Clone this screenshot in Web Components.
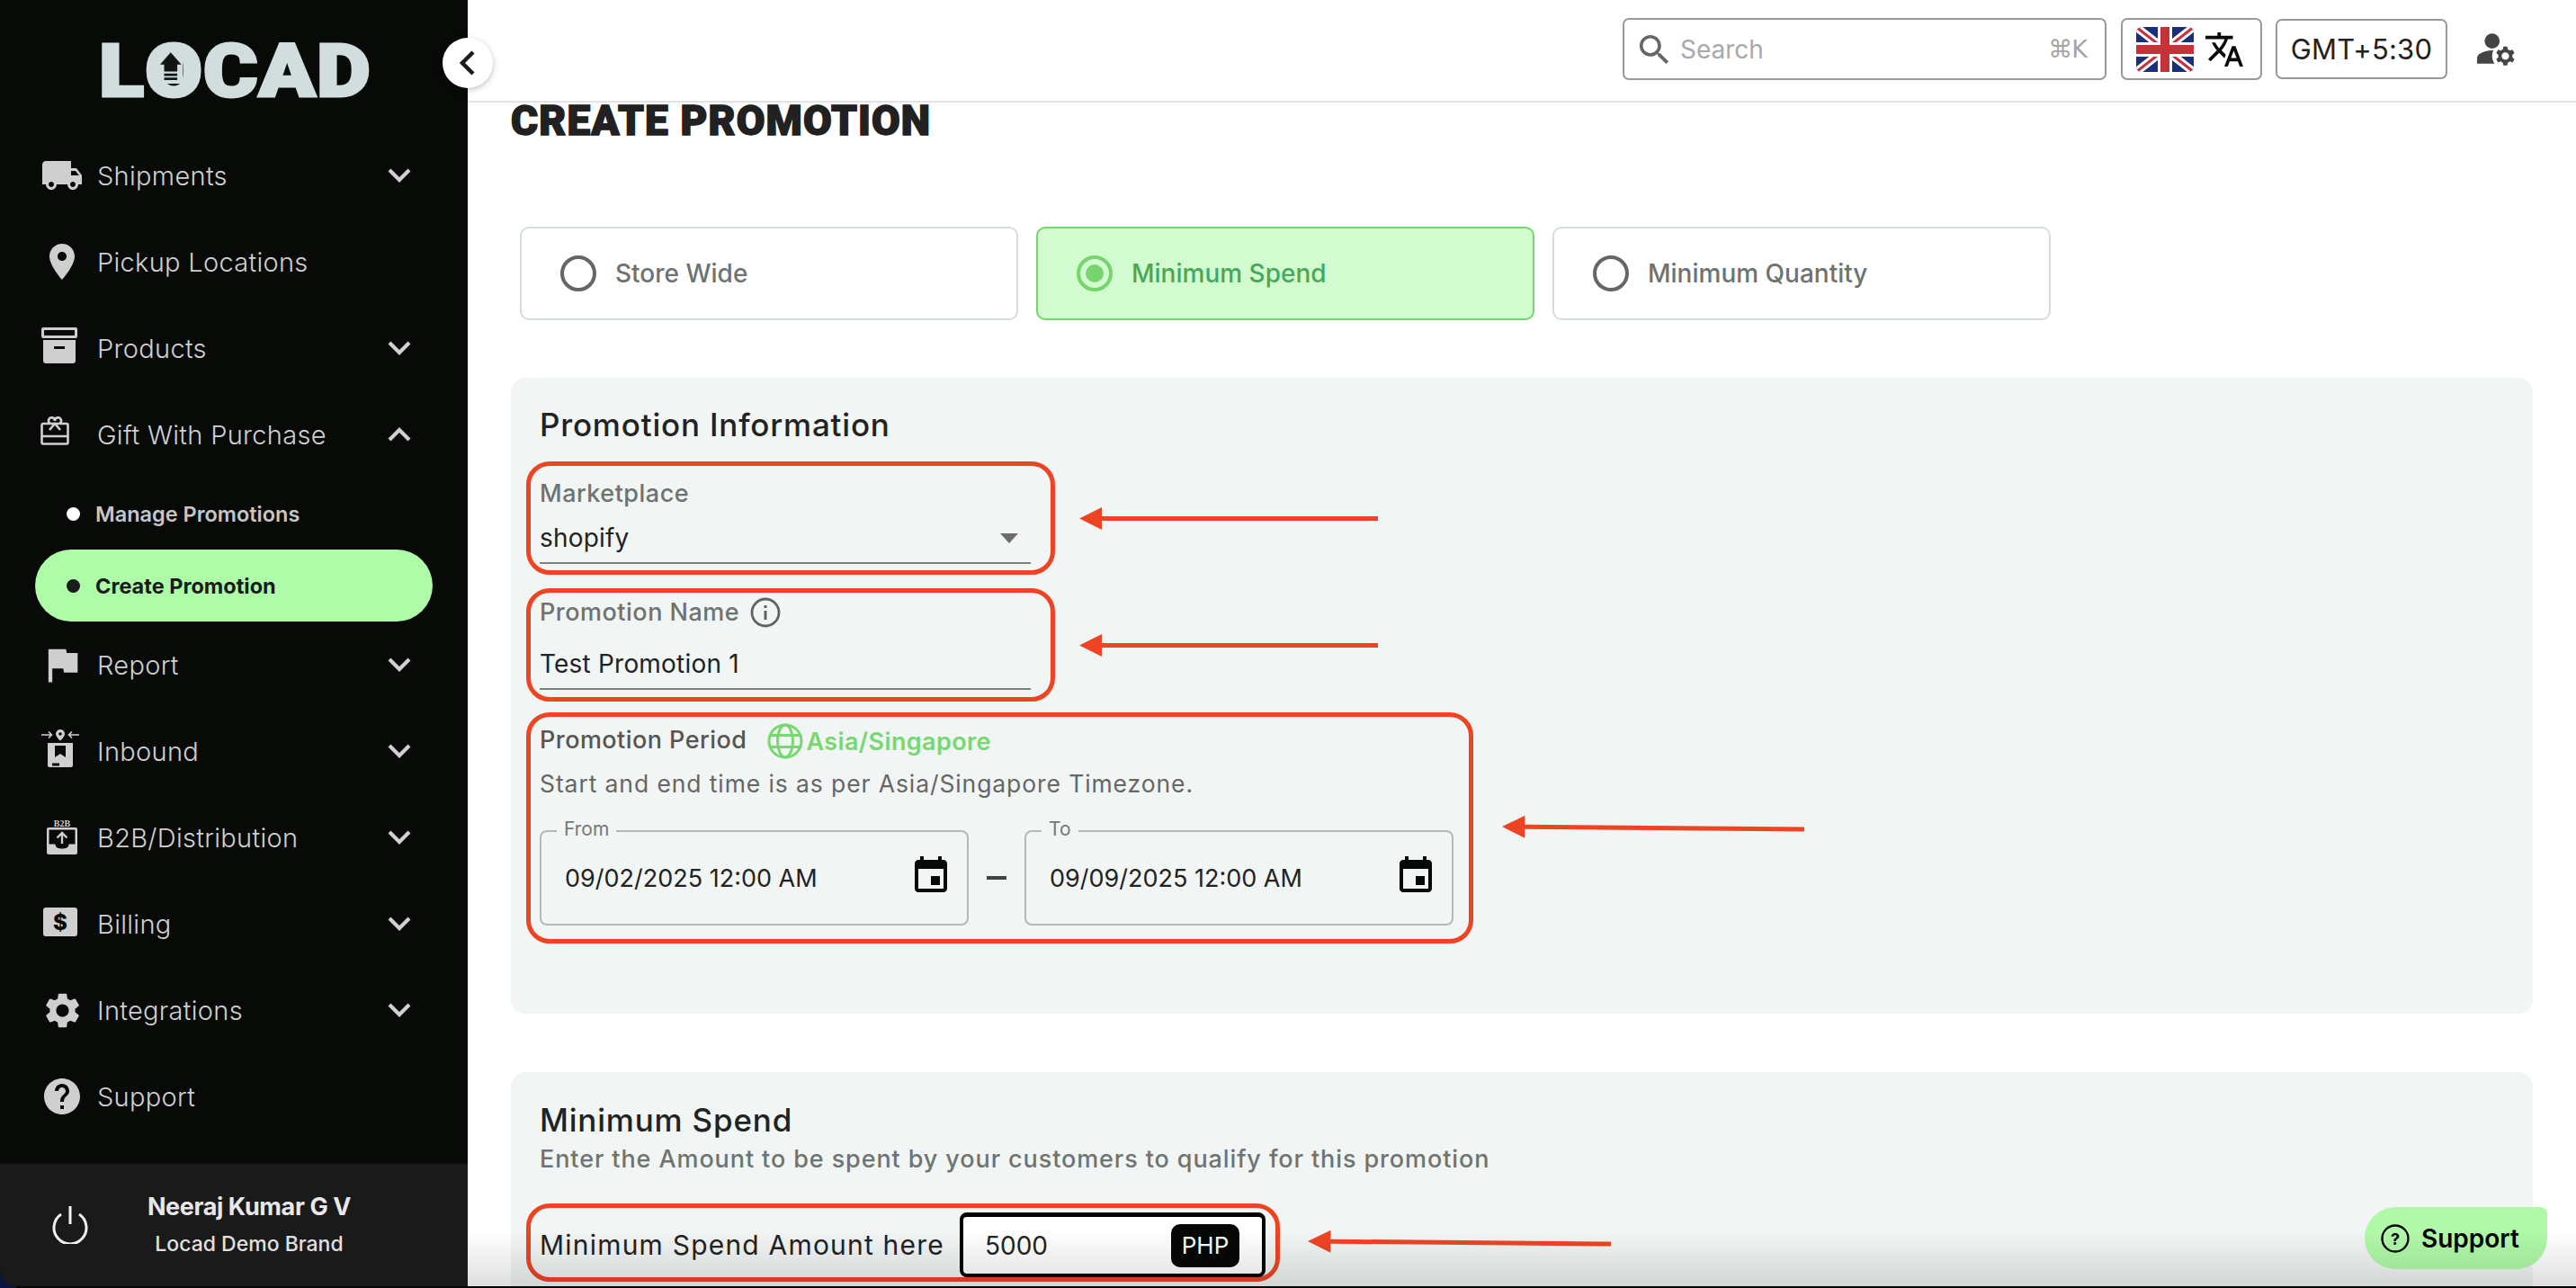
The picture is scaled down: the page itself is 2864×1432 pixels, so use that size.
<!DOCTYPE html>
<html>
<head>
<meta charset="utf-8">
<title>Create Promotion</title>
<style>
  html, body { margin: 0; padding: 0; background: linear-gradient(90deg, #07153f 0, #07153f 18px, #050505 18px); }
  body { width: 2864px; height: 1432px; overflow: hidden; font-family: Inter, "Liberation Sans", sans-serif; }
</style>
</head>
<body>
<app-shell>
  <side-nav slot="nav">
    <nav-item label="Shipments" chevron="down">
      <svg slot="icon" width="48" height="48" viewBox="0 0 24 24"><path d="M20 8h-3V4H3c-1.1 0-2 .9-2 2v11h2c0 1.66 1.34 3 3 3s3-1.34 3-3h6c0 1.66 1.34 3 3 3s3-1.34 3-3h2v-5l-3-4zM6 18.5c-.83 0-1.5-.67-1.5-1.5s.67-1.5 1.5-1.5 1.5.67 1.5 1.5-.67 1.5-1.5 1.5zm13.5-9l1.96 2.5H17V9.5h2.5zm-1.5 9c-.83 0-1.5-.67-1.5-1.5s.67-1.5 1.5-1.5 1.5.67 1.5 1.5-.67 1.5-1.5 1.5z"/></svg>
    </nav-item>
    <nav-item label="Pickup Locations">
      <svg slot="icon" width="48" height="48" viewBox="0 0 24 24"><path d="M12 2C8.13 2 5 5.13 5 9c0 5.25 7 13 7 13s7-7.75 7-13c0-3.87-3.13-7-7-7zm0 9.5c-1.38 0-2.5-1.12-2.5-2.5s1.12-2.5 2.5-2.5 2.5 1.12 2.5 2.5-1.12 2.5-2.5 2.5z"/></svg>
    </nav-item>
    <nav-item label="Products" chevron="down">
      <svg slot="icon" width="40" height="40" viewBox="0 0 40 40" style="margin:-6px 6px 0 0"><path fill-rule="evenodd" d="M2 0h36a2 2 0 0 1 2 2v8a2 2 0 0 1-2 2H2a2 2 0 0 1-2-2V2a2 2 0 0 1 2-2zm1 3v6h34V3zM2 14h36v23a3 3 0 0 1-3 3H5a3 3 0 0 1-3-3zm12 7v3h12v-3z"/></svg>
    </nav-item>
    <nav-item label="Gift With Purchase" chevron="up">
      <svg slot="icon" width="32" height="32" viewBox="0 0 32 32" style="margin:-8px 16px 0 0"><path fill="none" stroke="#cfcfcf" stroke-width="2.6" d="M3 8h26a1.5 1.5 0 0 1 1.5 1.5v19.500a1.500 1.500 0 0 1-1.500 1.500H3a1.500 1.500 0 0 1-1.500-1.500V9.500A1.500 1.500 0 0 1 3 8zM1.500 22h29M11 8a3.500 3.500 0 1 1 5-3 3.500 3.500 0 1 1 5 3M10 15l6-7 6 7"/></svg>
    </nav-item>
    <sub-item>Manage Promotions</sub-item>
    <sub-item active>Create Promotion</sub-item>
    <nav-item label="Report" chevron="down">
      <svg slot="icon" width="52" height="52" viewBox="0 0 24 24"><path d="M14.400 6L14 4H5v17h2v-7h5.600l.4 2h7V6z"/></svg>
    </nav-item>
    <nav-item label="Inbound" chevron="down">
      <svg slot="icon" width="42" height="42" viewBox="0 0 42 42" style="margin:-6px 4px 0 0"><path fill="none" stroke="#cfcfcf" stroke-width="1.600" d="M0 6h11M8 2.500 11.500 6 8 9.500M42 6H31M34 2.500 30.500 6 34 9.500"/><path fill-rule="evenodd" d="M21 0a5 5 0 0 1 5 5c0 3-5 7.500-5 7.500S16 8 16 5a5 5 0 0 1 5-5zm0 3.200a1.800 1.800 0 1 0 0 3.600 1.800 1.800 0 0 0 0-3.600z"/><path fill-rule="evenodd" d="M7 15h28v25a2 2 0 0 1-2 2H9a2 2 0 0 1-2-2zm8 3v13l6-4 6 4V18zm-3 19.500v3h8v-3z"/></svg>
    </nav-item>
    <nav-item label="B2B/Distribution" chevron="down">
      <svg slot="icon" width="34" height="40" viewBox="0 0 34 40" style="margin-top:-2px"><text x="17" y="8.500" text-anchor="middle" font-family="Liberation Serif, serif" font-size="10" font-weight="700" fill="#cfcfcf">B2B</text><path fill-rule="evenodd" d="M2 10h30a2 2 0 0 1 2 2v26a2 2 0 0 1-2 2H2a2 2 0 0 1-2-2V12a2 2 0 0 1 2-2zm.5 2.500v16h7c0 4 3.400 5 7.500 5s7.500-1 7.500-5h7v-16z"/><path fill="none" stroke="#cfcfcf" stroke-width="2.400" d="M17 28V16M11.500 21.500 17 16l5.500 5.500"/></svg>
    </nav-item>
    <nav-item label="Billing" chevron="down">
      <svg slot="icon" width="38" height="32" viewBox="0 0 38 32" style="margin:-4px 4px 0 0"><rect width="38" height="32" rx="3" fill="#cfcfcf"/><text x="19" y="25" text-anchor="middle" font-family="Inter, sans-serif" font-size="24" font-weight="800" fill="#070a07">$</text></svg>
    </nav-item>
    <nav-item label="Integrations" chevron="down">
      <svg slot="icon" width="47" height="47" viewBox="0 0 24 24"><path d="M19.140 12.940c.04-.3.06-.61.06-.94 0-.32-.02-.64-.07-.94l2.030-1.580c.18-.14.23-.41.12-.61l-1.920-3.320c-.12-.22-.37-.29-.59-.22l-2.390.96c-.5-.38-1.030-.7-1.620-.94l-.36-2.540c-.04-.24-.24-.41-.48-.41h-3.840c-.24 0-.43.17-.47.41l-.36 2.540c-.59.24-1.130.57-1.620.94l-2.390-.96c-.22-.08-.47 0-.59.22L2.740 8.870c-.12.21-.08.47.12.61l2.030 1.580c-.05.3-.09.63-.09.94s.02.64.07.94l-2.030 1.580c-.18.14-.23.41-.12.61l1.920 3.320c.12.22.37.29.59.22l2.390-.96c.5.38 1.030.7 1.620.94l.36 2.540c.05.24.24.41.48.41h3.840c.24 0 .44-.17.47-.41l.36-2.540c.59-.24 1.130-.56 1.620-.94l2.390.96c.22.08.47 0 .59-.22l1.920-3.320c.12-.22.07-.47-.12-.61l-2.010-1.580zM12 15.600c-1.980 0-3.600-1.620-3.600-3.600s1.620-3.600 3.600-3.600 3.600 1.620 3.600 3.600-1.620 3.600-3.600 3.600z"/></svg>
    </nav-item>
    <nav-item label="Support">
      <svg slot="icon" width="48" height="48" viewBox="0 0 24 24"><path d="M12 2C6.480 2 2 6.480 2 12s4.480 10 10 10 10-4.480 10-10S17.520 2 12 2zm1 17h-2v-2h2v2zm2.070-7.750l-.9.920C13.450 12.900 13 13.500 13 15h-2v-.5c0-1.100.45-2.100 1.170-2.830l1.240-1.260c.37-.36.59-.86.59-1.410 0-1.100-.9-2-2-2s-2 .9-2 2H8c0-2.210 1.790-4 4-4s4 1.790 4 4c0 .88-.36 1.680-.93 2.250z"/></svg>
    </nav-item>
  </side-nav>

  <top-bar slot="top"></top-bar>

  <h-title slot="main">CREATE PROMOTION</h-title>

  <radio-row slot="main">
    <radio-card>Store Wide</radio-card>
    <radio-card checked>Minimum Spend</radio-card>
    <radio-card>Minimum Quantity</radio-card>
  </radio-row>

  <form-card slot="main" style="height:707px;margin-top:64px;padding-top:30px">
    <card-heading>Promotion Information</card-heading>
    <mark-box style="width:588px;height:126px;margin-top:19px;padding:13px 0 0 10px">
      <text-field label="Marketplace" value="shopify" gap="11" select></text-field>
    </mark-box>
    <mark-box style="width:588px;height:126px;margin-top:15px;padding:4px 0 0 10px">
      <text-field label="Promotion Name" value="Test Promotion 1" gap="19" info></text-field>
    </mark-box>
    <mark-box style="width:1053px;height:257px;margin-top:12px;padding:7px 0 0 10px">
      <period-head></period-head>
      <date-range></date-range>
    </mark-box>
  </form-card>

  <form-card slot="main" style="height:300px;margin-top:65px;padding-top:31px">
    <card-heading>Minimum Spend</card-heading>
    <card-note>Enter the Amount to be spent by your customers to qualify for this promotion</card-note>
    <mark-box style="width:838px;height:87px;margin-top:31px;padding:5px 11px 0 10px">
      <spend-row></spend-row>
    </mark-box>
  </form-card>

  <note-arrow slot="over" style="left:680px;top:564px;width:332px"></note-arrow>
  <note-arrow slot="over" style="left:680px;top:705px;width:332px"></note-arrow>
  <note-arrow slot="over" style="left:1150px;top:908px;width:336px" tilt="3"></note-arrow>
  <note-arrow slot="over" style="left:934px;top:1369px;width:337px" tilt="3"></note-arrow>
  <support-fab slot="over"></support-fab>
</app-shell>

<script>
const FONT = 'Inter, "Liberation Sans", sans-serif';

function tpl(html) {
  const t = document.createElement('template');
  t.innerHTML = html;
  return t;
}

class Base extends HTMLElement {
  constructor() {
    super();
    this.attachShadow({ mode: 'open' });
    this.shadowRoot.appendChild(this.constructor.template.content.cloneNode(true));
  }
}

class AppShell extends Base {
  static template = tpl(`
    <style>
      :host { display: grid; grid-template-columns: 520px 1fr; width: 2864px; height: 1430px; position: relative; }
      .right { background: #fff; display: flex; flex-direction: column; height: 1430px; overflow: hidden; position: relative; }
      .scroll { flex: 1; overflow: hidden; padding: 0 48px; }
      .shade { position: absolute; left: 0; right: 0; bottom: 0; height: 62px; z-index: 5; pointer-events: none;
        background: linear-gradient(rgba(0,0,0,0), rgba(0,0,0,.125)); }
      .collapse { position: absolute; left: 492px; top: 42px; width: 56px; height: 56px; border-radius: 50%; background: #fff;
        box-shadow: 0 2px 6px rgba(0,0,0,.25); display: flex; align-items: center; justify-content: center; z-index: 6; }
    </style>
    <slot name="nav"></slot>
    <div class="right">
      <slot name="top"></slot>
      <div class="scroll"><slot name="main"></slot></div>
      <slot name="over"></slot>
      <div class="shade"></div>
    </div>
    <div class="collapse">
      <svg width="20" height="30" viewBox="0 0 20 30"><path d="M16 3 4 15l12 12" fill="none" stroke="#1c1c1c" stroke-width="4.500"/></svg>
    </div>`);
}

class SideNav extends Base {
  static template = tpl(`
    <style>
      :host { display: flex; flex-direction: column; width: 520px; height: 1430px; background: #070a07; color: #cfcfcf;
        border-bottom-left-radius: 18px; overflow: hidden; font-family: ${FONT}; }
      .logo { height: 147px; box-sizing: border-box; padding: 40px 0 0 110px; flex: none; }
      .mark { display: inline-block; font: 900 81px/80px Roboto, sans-serif; color: #d1dedd; -webkit-text-stroke: 3px #d1dedd; letter-spacing: 1px; white-space: nowrap;
        transform: scaleX(1.14); transform-origin: left center; }
      .o { position: relative; display: inline-block; }
      .o svg { position: absolute; left: 13px; top: 17px; width: 24px; height: 36px; }
      .list { flex: 1; }
      .foot { height: 136px; flex: none; background: #1a1a1a; display: flex; align-items: center; box-sizing: border-box; padding-left: 58px; }
      .who { width: 300px; margin-left: 29px; text-align: center; }
      .name { font-size: 27px; line-height: 38px; font-weight: 700; color: #e8e8e8; letter-spacing: -.4px; }
      .brand { font-size: 23px; line-height: 36px; font-weight: 500; color: #e0e0e0; margin-top: 4px; }
    </style>
    <div class="logo"><span class="mark">L<span class="o">O<svg viewBox="0 0 30 32" preserveAspectRatio="none"><rect x="-6" y="-2" width="42" height="36" fill="#d1dedd"/><path d="M15 1 28 13h-5v7H7v-7H2z" fill="#101412"/><path d="M7 22h16v2.500H7zM7 26h16v2.500H7z" fill="#101412"/></svg></span>CAD</span></div>
    <div class="list"><slot></slot></div>
    <div class="foot">
      <svg width="40" height="42" viewBox="0 0 40 42"><path d="M10 9a18 18 0 1 0 20 0M20 0v20" fill="none" stroke="#f2f2f2" stroke-width="3"/></svg>
      <div class="who"><div class="name">Neeraj Kumar G V</div><div class="brand">Locad Demo Brand</div></div>
    </div>`);
}

class NavItem extends Base {
  static template = tpl(`
    <style>
      :host { display: flex; align-items: center; height: 96px; color: #d0d0d0; }
      .ico { width: 60px; margin-left: 39px; display: flex; justify-content: center; align-items: center; fill: #cfcfcf; }
      ::slotted(svg) { fill: #cfcfcf; display: block; }
      .txt { margin-left: 9px; flex: 1; font-size: 29px; font-weight: 300; letter-spacing: .3px; white-space: nowrap; }
      svg.chev { margin-right: 63px; }
    </style>
    <div class="ico"><slot name="icon"></slot></div>
    <div class="txt"></div>
    <svg class="chev" width="26" height="18" viewBox="0 0 26 18"><path fill="none" stroke="#d0d0d0" stroke-width="4.200"/></svg>`);
  connectedCallback() {
    this.shadowRoot.querySelector('.txt').textContent = this.getAttribute('label');
    const chev = this.shadowRoot.querySelector('.chev');
    const dir = this.getAttribute('chevron');
    if (!dir) chev.style.visibility = 'hidden';
    chev.querySelector('path').setAttribute('d', dir === 'up' ? 'M2 15 13 4l11 11' : 'M2 3l11 11L24 3');
  }
}

class SubItem extends Base {
  static template = tpl(`
    <style>
      :host { display: flex; align-items: center; height: 80px; margin: 0 39px; padding-left: 35px; box-sizing: border-box; width: 442px;
        border-radius: 40px; font-size: 23.500px; font-weight: 600; color: #c6c6c6; }
      :host([active]) { background: #aefba8; color: #1a1c1a; font-weight: 700; }
      .dot { width: 15px; height: 15px; border-radius: 50%; background: #fff; margin-right: 17px; }
      :host([active]) .dot { background: #1a1c1a; }
    </style>
    <span class="dot"></span><slot></slot>`);
}

class TopBar extends Base {
  static template = tpl(`
    <style>
      :host { display: flex; align-items: center; height: 114px; flex: none; box-sizing: border-box; padding: 0 66px 3px 0; justify-content: flex-end;
        background: #fff; border-bottom: 2px solid #e3e3e3; box-shadow: 0 2px 6px rgba(0,0,0,.04); font-family: ${FONT}; position: relative; z-index: 2; }
      .box { height: 69px; box-sizing: border-box; border: 2px solid #999; border-radius: 7px; display: flex; align-items: center; }
      .search { width: 538px; padding: 0 20px 0 16px; color: #a9a9a9; font-size: 28px; }
      .search span { flex: 1; margin-left: 12px; }
      .search b { font: 400 27px "DejaVu Sans", sans-serif; color: #a5a5a5; letter-spacing: -1px; }
      .lang { width: 157px; margin-left: 16px; padding-left: 15px; }
      .lang .tr { margin-left: 13px; }
      .gmt { width: 191px; margin-left: 15px; justify-content: center; font-size: 31px; color: #222; letter-spacing: .2px; height: 67px; }
      .user { margin-left: 33px; }
    </style>
    <div class="box search">
      <svg width="34" height="34" viewBox="2.500 2.500 18.500 18.500"><path fill="#666" d="M15.500 14h-.79l-.28-.27C15.410 12.590 16 11.110 16 9.500 16 5.910 13.090 3 9.500 3S3 5.910 3 9.500 5.910 16 9.500 16c1.610 0 3.090-.59 4.230-1.570l.27.28v.79l5 4.990L20.490 19l-4.990-5zm-6 0C7.010 14 5 11.990 5 9.500S7.010 5 9.500 5 14 7.010 14 9.500 11.990 14 9.500 14z"/></svg>
      <span>Search</span><b>⌘K</b>
    </div>
    <div class="box lang">
      <svg width="64" height="50" viewBox="0 0 64 50"><defs><clipPath id="fl"><rect width="64" height="50" rx="6"/></clipPath></defs><g clip-path="url(#fl)"><rect width="64" height="50" fill="#1a2f7a"/><path d="M0 0l64 50M64 0 0 50" stroke="#fff" stroke-width="9"/><path d="M0 0l64 50M64 0 0 50" stroke="#c8303a" stroke-width="3"/><path d="M32 0v50M0 25h64" stroke="#fff" stroke-width="16"/><path d="M32 0v50M0 25h64" stroke="#c8303a" stroke-width="10"/></g></svg>
      <svg class="tr" width="42" height="42" viewBox="1 2 22 20"><path fill="#0a0a0a" d="M12.870 15.070l-2.540-2.510.03-.03c1.740-1.940 2.980-4.170 3.710-6.530H17V4h-7V2H8v2H1v1.990h11.170C11.500 7.920 10.440 9.750 9 11.350 8.070 10.320 7.300 9.190 6.690 8h-2c.73 1.630 1.730 3.170 2.980 4.560l-5.090 5.020L4 19l5-5 3.110 3.110.76-2.040zM18.500 10h-2L12 22h2l1.120-3h4.750L21 22h2l-4.500-12zm-2.620 7l1.620-4.330L19.120 17h-3.240z"/></svg>
    </div>
    <div class="box gmt">GMT+5:30</div>
    <svg class="user" width="44" height="40" viewBox="2 3.500 21 18"><circle cx="10" cy="8" r="4" fill="#444"/><path fill="#444" d="M10.670 13.020C10.450 13.010 10.230 13 10 13c-2.420 0-4.680.67-6.610 1.820-.88.52-1.390 1.500-1.390 2.530V20h9.260c-.79-1.130-1.260-2.510-1.260-4 0-1.070.25-2.070.67-2.980z"/><path fill="#444" d="M20.750 16c0-.22-.03-.42-.06-.63l1.140-1.010-1-1.730-1.450.49c-.32-.27-.68-.48-1.080-.63L18 11h-2l-.3 1.490c-.4.15-.76.36-1.080.63l-1.450-.49-1 1.730 1.140 1.010c-.03.21-.06.41-.06.63s.03.42.06.63l-1.140 1.010 1 1.730 1.450-.49c.32.27.68.48 1.080.63L16 21h2l.3-1.490c.4-.15.76-.36 1.080-.63l1.450.49 1-1.730-1.140-1.010c.03-.21.06-.41.06-.63zM17 18c-1.100 0-2-.9-2-2s.9-2 2-2 2 .9 2 2-.9 2-2 2z"/></svg>`);
}

class HTitle extends Base {
  static template = tpl(`
    <style>
      :host { display: block; height: 44px; margin-top: -2px; font: 900 46px/44px Roboto, sans-serif; color: #212121; -webkit-text-stroke: 1.500px #212121; letter-spacing: 1.100px; white-space: nowrap; }
    </style>
    <slot></slot>`);
}

class RadioRow extends Base {
  static template = tpl(`
    <style>:host { display: flex; gap: 20px; margin: 96px 0 0 10px; }</style>
    <slot></slot>`);
}

class RadioCard extends Base {
  static template = tpl(`
    <style>
      :host { display: flex; align-items: center; width: 554px; height: 104px; box-sizing: border-box; padding-left: 43px;
        background: #fff; border: 2px solid #d1dedd; border-radius: 10px; font-size: 28px; font-weight: 500; color: #6c7371; font-family: ${FONT}; }
      :host([checked]) { background: #d2fbcf; border-color: #72d66d; color: #46a85a; }
      .r { width: 40px; height: 40px; border-radius: 50%; box-sizing: border-box; border: 4px solid #666; margin-right: 21px; display: flex; align-items: center; justify-content: center; }
      :host([checked]) .r { border-color: #77d570; }
      .r i { display: none; width: 20px; height: 20px; border-radius: 50%; background: #77d570; }
      :host([checked]) .r i { display: block; }
    </style>
    <span class="r"><i></i></span><slot></slot>`);
}

class FormCard extends Base {
  static template = tpl(`
    <style>
      :host { display: block; box-sizing: border-box; width: 2248px; background: #f1f5f4; border-radius: 16px; padding-left: 32px; font-family: ${FONT}; }
      ::slotted(mark-box) { margin-left: -15px; }
    </style>
    <slot></slot>`);
}

class CardHeading extends Base {
  static template = tpl(`
    <style>:host { display: block; font-size: 35px; line-height: 44px; font-weight: 500; letter-spacing: .8px; color: #212322; }</style>
    <slot></slot>`);
}

class CardNote extends Base {
  static template = tpl(`
    <style>:host { display: block; font-size: 27px; line-height: 36px; margin-top: 4px; font-weight: 500; letter-spacing: .9px; color: #6e7472; white-space: nowrap; }</style>
    <slot></slot>`);
}

class MarkBox extends Base {
  static template = tpl(`
    <style>
      :host { display: block; box-sizing: border-box; border: 5px solid #ee4423; border-radius: 26px; }
    </style>
    <slot></slot>`);
}

class TextField extends Base {
  static template = tpl(`
    <style>
      :host { display: block; width: 546px; }
      .lab { display: flex; align-items: center; gap: 12px; font-size: 27px; line-height: 36px; font-weight: 500; letter-spacing: .5px; color: #6c7371; }
      .val { display: flex; align-items: center; justify-content: space-between; font-size: 28px; line-height: 40px; letter-spacing: .2px; color: #222; padding-bottom: 7px; border-bottom: 2px solid #808080; padding-right: 14px; }
      svg { display: none; }
      :host([select]) .tri, :host([info]) .inf { display: block; }
    </style>
    <div class="lab"><span class="l"></span>
      <svg class="inf" width="34" height="34" viewBox="0 0 34 34"><circle cx="17" cy="17" r="15" fill="none" stroke="#5e6462" stroke-width="2.800"/><path d="M15.500 15h3v10h-3zM15.500 9h3v3h-3z" fill="#5e6462"/></svg>
    </div>
    <div class="val"><span class="v"></span>
      <svg class="tri" width="20" height="11" viewBox="0 0 20 11"><path d="M0 0h20L10 11z" fill="#6d6d6d"/></svg>
    </div>`);
  connectedCallback() {
    const s = this.shadowRoot;
    s.querySelector('.l').textContent = this.getAttribute('label');
    s.querySelector('.v').textContent = this.getAttribute('value');
    s.querySelector('.val').style.marginTop = this.getAttribute('gap') + 'px';
  }
}

class PeriodHead extends Base {
  static template = tpl(`
    <style>
      :host { display: block; }
      .row { display: flex; align-items: center; height: 36px; font-size: 27px; font-weight: 500; letter-spacing: .45px; color: #555; }
      .globe { margin-left: 23px; margin-right: 3px; }
      .tz { color: #77d86f; font-weight: 600; margin-top: 4px; letter-spacing: .4px; }
      .note { font-size: 26.500px; line-height: 36px; margin-top: 13px; letter-spacing: .9px; color: #666; white-space: nowrap; }
    </style>
    <div class="row"><span>Promotion Period</span>
      <svg class="globe" width="40" height="40" viewBox="0 0 40 40" style="margin-top:4px"><g fill="none" stroke="#77d86f" stroke-width="3"><circle cx="20" cy="20" r="18"/><ellipse cx="20" cy="20" rx="8.500" ry="18"/><path d="M3 13.500h34M3 26.500h34"/></g></svg>
      <span class="tz">Asia/Singapore</span></div>
    <div class="note">Start and end time is as per Asia/Singapore Timezone.</div>`);
}

class DateRange extends Base {
  static template = tpl(`
    <style>
      :host { display: flex; align-items: center; margin-top: 34px; width: 1016px; }
      i { width: 22px; height: 4px; background: #444; margin: 0 20px; flex: none; }
    </style>
    <date-field label="From" value="09/02/2025 12:00 AM"></date-field>
    <i></i>
    <date-field label="To" value="09/09/2025 12:00 AM"></date-field>`);
}

class DateField extends Base {
  static template = tpl(`
    <style>
      :host { display: flex; align-items: center; justify-content: space-between; position: relative; box-sizing: border-box; width: 477px; height: 106px;
        border: 2px solid #b5b8b7; border-radius: 8px; padding: 0 16px 0 26px; font-size: 27px; color: #222; }
      .leg { position: absolute; left: 17px; top: -16px; padding: 0 8px; background: #f1f5f4; font-size: 21px; line-height: 26px; color: #777; }
      svg { margin-top: -4px; }
    </style>
    <span class="leg"></span><span class="v"></span>
    <svg width="48" height="48" viewBox="0 0 24 24"><path fill="#060a06" d="M17 12h-5v5h5v-5zM16 1v2H8V1H6v2H5c-1.110 0-1.990.9-1.990 2L3 19c0 1.100.89 2 2 2h14c1.100 0 2-.9 2-2V5c0-1.100-.9-2-2-2h-1V1h-2zm3 18H5V8h14v11z"/></svg>`);
  connectedCallback() {
    this.shadowRoot.querySelector('.leg').textContent = this.getAttribute('label');
    this.shadowRoot.querySelector('.v').textContent = this.getAttribute('value');
  }
}

class SpendRow extends Base {
  static template = tpl(`
    <style>
      :host { display: flex; align-items: center; justify-content: space-between; height: 72px; font-size: 30px; letter-spacing: 1.200px; color: #222; }
      .inp { width: 340px; height: 72px; box-sizing: border-box; background: #fff; border: 4px solid #000; border-top-width: 5px; border-radius: 8px; letter-spacing: 0;
        display: flex; align-items: center; justify-content: space-between; padding: 0 25px 0 24px; font-size: 28px; }
      .cur { width: 76px; height: 48px; background: #060806; color: #fff; border-radius: 10px; display: flex; align-items: center; justify-content: center; font-size: 26px; }
    </style>
    <span>Minimum Spend Amount here</span>
    <div class="inp"><span>5000</span><span class="cur">PHP</span></div>`);
}

class NoteArrow extends Base {
  static template = tpl(`
    <style>
      :host { display: block; position: absolute; height: 25px; z-index: 3; }
      svg { display: block; width: 100%; height: 25px; overflow: visible; }
    </style>
    <svg viewBox="0 0 332 25" preserveAspectRatio="none"><path d="M0 12.500 25 0v10l307 0v5L25 15v10z" fill="#ee4423"/></svg>`);
  connectedCallback() {
    const tilt = this.getAttribute('tilt');
    if (tilt) this.style.transform = 'rotate(' + tilt / this.offsetWidth * 57.3 + 'deg)';
  }
}

class SupportFab extends Base {
  static template = tpl(`
    <style>
      :host { position: absolute; left: 2109px; top: 1342px; width: 203px; height: 69px; box-sizing: border-box; padding-left: 18px; display: flex; align-items: center; gap: 13px;
        background: #b0f9a8; border-radius: 35px 8px 35px 35px; font: 600 28px Inter, sans-serif; color: #050505; z-index: 4; }
    </style>
    <svg width="32" height="32" viewBox="0 0 32 32"><circle cx="16" cy="16" r="14.500" fill="none" stroke="#050505" stroke-width="2.400"/><text x="16" y="22.500" text-anchor="middle" font-family="Inter, sans-serif" font-size="18" font-weight="700" fill="#050505">?</text></svg>
    <span>Support</span>`);
}

const defs = {
  'app-shell': AppShell, 'side-nav': SideNav, 'nav-item': NavItem, 'sub-item': SubItem, 'top-bar': TopBar, 'h-title': HTitle,
  'radio-row': RadioRow, 'radio-card': RadioCard, 'form-card': FormCard, 'card-heading': CardHeading, 'card-note': CardNote,
  'mark-box': MarkBox, 'text-field': TextField, 'period-head': PeriodHead, 'date-range': DateRange, 'date-field': DateField,
  'spend-row': SpendRow, 'note-arrow': NoteArrow, 'support-fab': SupportFab
};
Object.keys(defs).forEach(function (k) { customElements.define(k, defs[k]); });
</script>
</body>
</html>
